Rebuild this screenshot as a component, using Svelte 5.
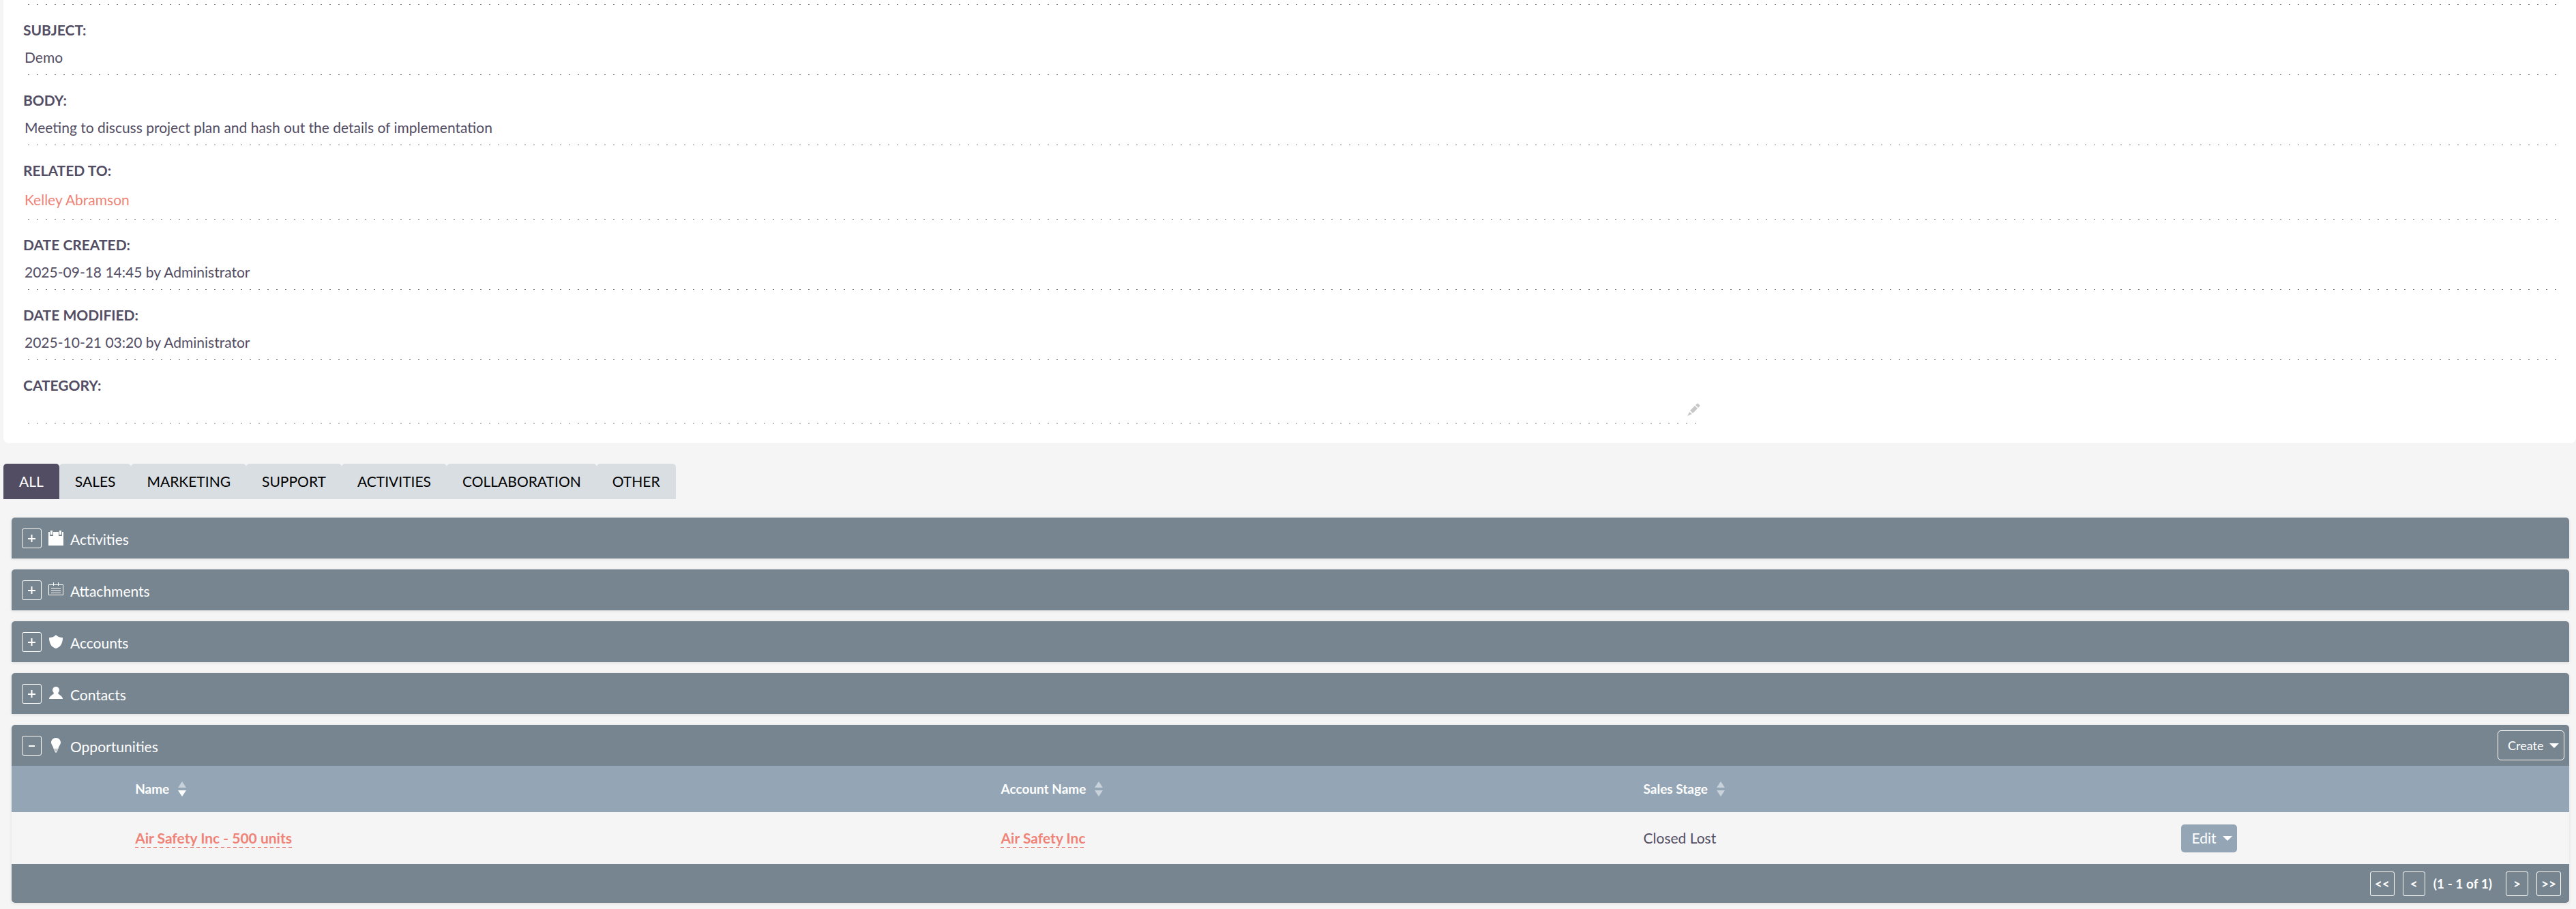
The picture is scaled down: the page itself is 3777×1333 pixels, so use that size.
<script lang="ts">
	interface Field {
		label: string;
		value: string;
		link?: boolean;
	}

	interface Column {
		title: string;
		sorted?: boolean;
	}

	const fields: Field[] = [
		{ label: 'SUBJECT', value: 'Demo' },
		{ label: 'BODY', value: 'Meeting to discuss project plan and hash out the details of implementation' },
		{ label: 'RELATED TO', value: 'Kelley Abramson', link: true },
		{ label: 'DATE CREATED', value: '2025-09-18 14:45 by Administrator' },
		{ label: 'DATE MODIFIED', value: '2025-10-21 03:20 by Administrator' }
	];

	const tabs = ['ALL', 'SALES', 'MARKETING', 'SUPPORT', 'ACTIVITIES', 'COLLABORATION', 'OTHER'];
	const panels = ['Activities', 'Attachments', 'Accounts', 'Contacts', 'Opportunities'];
	const columns: Column[] = [
		{ title: 'Name', sorted: true },
		{ title: 'Account Name' },
		{ title: 'Sales Stage' }
	];

	let activeTab = $state('ALL');
	let open = $state<Record<string, boolean>>({ Opportunities: true });
</script>

{#snippet icon(name: string)}
	<svg class="icon" viewBox="0 0 22 22" aria-hidden="true">
		{#if name === 'Activities'}
			<path d="M0 2h2v6h5V2h8v6h5V2h2v20H0z" />
			<path d="M3 0h3v6H3zM16 0h3v6h-3z" />
		{:else if name === 'Attachments'}
			<path class="line" d="M.5 3.500h21v15H.5zM7.500 0v5M14.500 0v5M4 8.500h14M4 12h14M4 15.500h14" />
		{:else if name === 'Accounts'}
			<path d="M11 1c3 3 6 4 10 4 0 8-3 14-10 16C4 19 1 13 1 5c4 0 7-1 10-4z" />
		{:else if name === 'Contacts'}
			<circle cx="11" cy="6" r="5" />
			<path d="M8 10h6c0 3 7 4 7 9H1c0-5 7-6 7-9z" />
		{:else}
			<path d="M11 0c4 0 7 3 7 7 0 3-3 5-3.500 9h-7C7 12 4 10 4 7c0-4 3-7 7-7z" />
			<path d="M8 17h6v1.500H8zM9 19.500h4l-1 2h-2z" />
		{/if}
	</svg>
{/snippet}

<section class="detail">
	<div class="dots"></div>
	{#each fields as field (field.label)}
		<div class="field">
			<div class="label">{field.label}:</div>
			<div class="value dots" class:linked={field.link}>
				{#if field.link}
					<a href="#related">{field.value}</a>
				{:else}
					{field.value}
				{/if}
			</div>
		</div>
	{/each}
	<div class="field category">
		<div class="label">CATEGORY:</div>
		<div class="value dots empty">
			<button class="pencil" aria-label="Edit category">
				<svg viewBox="0 0 20 20" aria-hidden="true">
					<path d="M13 3l2-2q1-1 2 0l2 2q1 1 0 2l-2 2zM5 11l7-7 4 4-7 7zM4 13l4 3-7 3z" />
				</svg>
			</button>
		</div>
	</div>
</section>

<nav class="tabs">
	{#each tabs as tab (tab)}
		<button class="tab" class:active={activeTab === tab} onclick={() => (activeTab = tab)}>{tab}</button>
	{/each}
</nav>

<main class="panels">
	{#each panels as panel (panel)}
		<section class="panel">
			<header class="bar">
				<button
					class="toggle"
					aria-label={`Toggle ${panel}`}
					aria-expanded={!!open[panel]}
					onclick={() => (open[panel] = !open[panel])}
				>
					<svg viewBox="0 0 11 11" aria-hidden="true">
						<path d={open[panel] ? 'M1 5h9v2H1z' : 'M0 5h4.500V0h2v5H11v2H6.500v4h-2V7H0z'} />
					</svg>
				</button>
				{@render icon(panel)}
				<h3>{panel}</h3>
				{#if panel === 'Opportunities'}
					<button class="create">Create <span class="caret"></span></button>
				{/if}
			</header>
			{#if panel === 'Opportunities' && open[panel]}
				<table>
					<colgroup>
						<col class="c-pad" />
						<col class="c-name" />
						<col class="c-account" />
						<col class="c-stage" />
						<col />
					</colgroup>
					<thead>
						<tr>
							<th></th>
							{#each columns as col (col.title)}
								<th scope="col">
									<div class="head">
										{col.title}
										<svg class="sort" viewBox="0 0 12 22" aria-hidden="true">
											<path d="M6 0l6 9H0z" />
											<path class:on={col.sorted} d="M6 22l6-9H0z" />
										</svg>
									</div>
								</th>
							{/each}
							<th></th>
						</tr>
					</thead>
					<tbody>
						<tr>
							<td></td>
							<td><a class="record" href="#opportunity">Air Safety Inc - 500 units</a></td>
							<td><a class="record" href="#account">Air Safety Inc</a></td>
							<td>Closed Lost</td>
							<td><button class="edit">Edit <span class="caret"></span></button></td>
						</tr>
					</tbody>
				</table>
				<footer class="pager">
					<button class="page end" aria-label="Start">&lt;&lt;</button>
					<button class="page" aria-label="Previous">&lt;</button>
					<span class="count">(1 - 1 of 1)</span>
					<button class="page" aria-label="Next">&gt;</button>
					<button class="page end" aria-label="End">&gt;&gt;</button>
				</footer>
			{/if}
		</section>
	{/each}
</main>

<style>
	:global(body) {
		background: #f5f5f5;
		color: #534d64;
		font-family: Lato, sans-serif;
		font-size: 21px;
		line-height: 28px;
	}

	button {
		padding: 0;
		border: 0;
		background: none;
		color: inherit;
		font: inherit;
		cursor: pointer;
	}

	a {
		color: #f08377;
		text-decoration: none;
	}

	.detail {
		margin-left: 5px;
		padding: 5px 18px 28px 29px;
		background: #fff;
		border-radius: 0 0 8px 8px;
	}

	/* dotted rule along the bottom edge */
	.dots {
		min-height: 3px;
		background: linear-gradient(90deg, transparent 7px, #777 7px 9px, transparent 9px) left 0 bottom 1px / 13px 1px
			repeat-x;
	}

	.field {
		padding-top: 22px;
	}

	.label {
		font-weight: 700;
	}

	.value {
		padding: 12px 0 13px 2px;
	}

	.linked {
		padding: 15px 0 16px 2px;
	}

	.category {
		width: 66%;
	}

	.empty {
		display: flex;
		justify-content: flex-end;
		padding: 12px 0 11px;
	}

	.pencil {
		display: flex;
	}

	.pencil svg {
		width: 20px;
		height: 20px;
		fill: #c8c8c8;
	}

	.tabs {
		display: flex;
		margin: 30px 0 0 5px;
	}

	.tab {
		height: 52px;
		padding: 0 23px;
		background: #d8dee2;
		border-radius: 5px 5px 0 0;
		color: #000;
	}

	.active {
		background: #534d64;
		color: #fff;
	}

	.panels {
		display: flex;
		flex-direction: column;
		gap: 16px;
		padding: 27px 10px 7px 17px;
	}

	.panel {
		border-radius: 5px 5px 0 0;
		box-shadow: 0 1px 4px rgba(0, 0, 0, 0.1);
	}

	.bar {
		display: flex;
		align-items: center;
		height: 60px;
		padding: 0 7px 0 15px;
		box-sizing: border-box;
		background: #778591;
		border-radius: 5px 5px 0 0;
		color: #fff;
	}

	.toggle {
		display: grid;
		place-items: center;
		width: 29px;
		height: 29px;
		border: 1px solid #fff;
		border-radius: 3px;
	}

	.toggle svg {
		width: 11px;
		height: 11px;
		fill: #fff;
	}

	.icon {
		width: 22px;
		height: 22px;
		margin: 0 10px;
		fill: #fff;
	}

	.line {
		fill: none;
		stroke: #fff;
	}

	h3 {
		margin: 4px auto 0 0;
		font-size: 21px;
		font-weight: 400;
	}

	.create,
	.edit {
		display: flex;
		align-items: center;
		justify-content: space-between;
		box-sizing: border-box;
		border-radius: 5px;
		color: #fff;
	}

	.create {
		width: 98px;
		height: 44px;
		padding: 0 7px 0 14px;
		border: 1px solid #fff;
		font-size: 18px;
	}

	.edit {
		width: 82px;
		height: 41px;
		padding: 0 7px 0 15px;
		background: #94a6b5;
	}

	.caret {
		border: 7px solid transparent;
		border-top-color: #fff;
		border-bottom: 0;
	}

	table {
		width: 100%;
		table-layout: fixed;
		border-collapse: collapse;
	}

	.c-pad {
		width: 4.83%;
	}

	.c-name {
		width: 33.85%;
	}

	.c-account {
		width: 25.12%;
	}

	.c-stage {
		width: 21.04%;
	}

	th {
		height: 68px;
		padding: 0;
		background: #94a6b5;
		color: #fff;
		font-size: 19px;
		text-align: left;
	}

	.head {
		display: flex;
		align-items: center;
		gap: 13px;
	}

	.sort {
		width: 12px;
		height: 22px;
		fill: #c9d2da;
	}

	.on {
		fill: #fff;
	}

	td {
		height: 76px;
		padding: 0;
	}

	/* long dashes, wider than border-style: dashed gives at 1px */
	.record {
		padding-bottom: 2px;
		background: linear-gradient(90deg, #e56455 5px, transparent 5px) left bottom / 9px 1px repeat-x;
		font-weight: 700;
	}

	.pager {
		display: flex;
		align-items: center;
		justify-content: flex-end;
		gap: 12px;
		height: 57px;
		padding-right: 12px;
		background: #778591;
		border-radius: 0 0 5px 5px;
		color: #fff;
		font-size: 19px;
		font-weight: 700;
	}

	.page {
		box-sizing: border-box;
		width: 33px;
		height: 36px;
		border: 1px solid #fff;
		border-radius: 3px;
	}

	.end {
		width: 36px;
	}

	.count {
		margin-right: 8px;
	}
</style>
